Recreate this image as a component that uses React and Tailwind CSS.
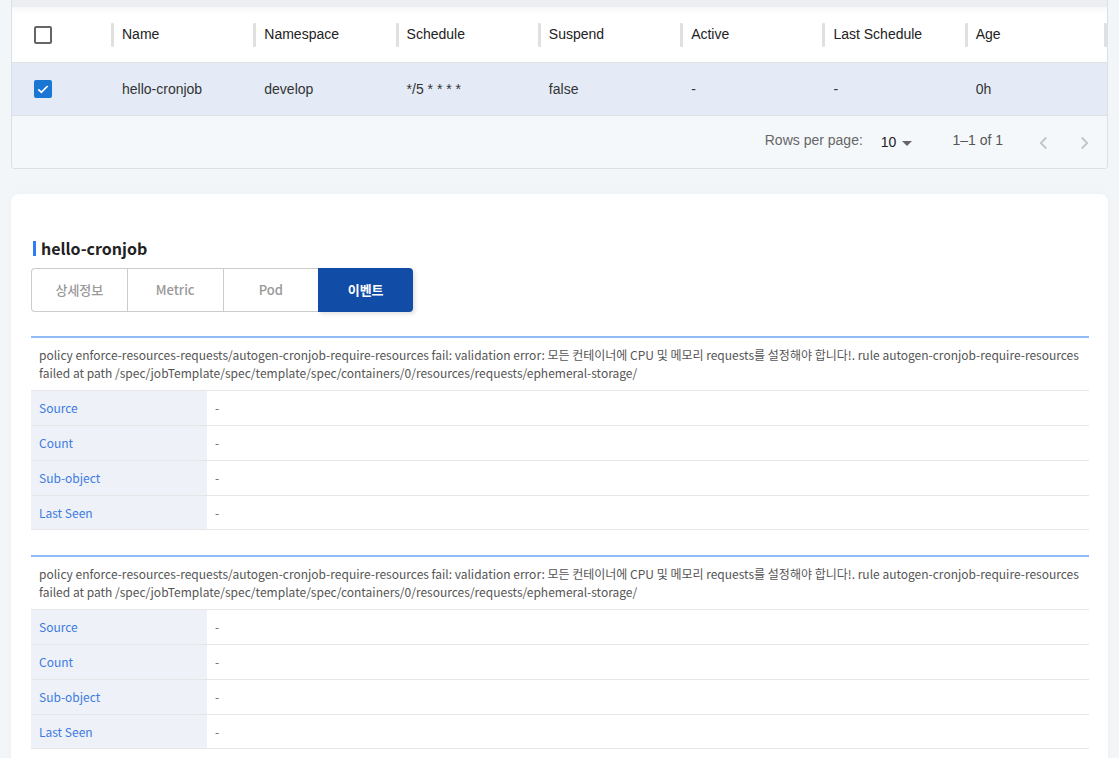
import React from "react";

const COLUMNS = ["Name", "Namespace", "Schedule", "Suspend", "Active", "Last Schedule", "Age"];
const ROW = ["hello-cronjob", "develop", "*/5 * * * *", "false", "-", "-", "0h"];

const MESSAGE =
  "policy enforce-resources-requests/autogen-cronjob-require-resources fail: validation error: 모든 컨테이너에 CPU 및 메모리 requests를 설정해야 합니다!. rule autogen-cronjob-require-resources failed at path /spec/jobTemplate/spec/template/spec/containers/0/resources/requests/ephemeral-storage/";

const EVENTS = [MESSAGE, MESSAGE];
const FIELDS = ["Source", "Count", "Sub-object", "Last Seen"];

const TABS = ["상세정보", "Metric", "Pod", "이벤트"];

const arial = { fontFamily: '"Liberation Sans", Arial, sans-serif' };
const noto = { fontFamily: '"Noto Sans CJK KR", "Noto Sans", sans-serif' };

/* ── Checkbox ── */
function Checkbox({ checked }) {
  if (checked) {
    return (
      <span className="w-[18px] h-[18px] rounded-[2px] bg-[#1976d2] flex items-center justify-center">
        <svg viewBox="0 0 24 24" className="w-[16px] h-[16px]" fill="none" stroke="#fff" strokeWidth="2.6">
          <path d="M5 12.5l4.5 4.5L19 7.5" />
        </svg>
      </span>
    );
  }
  return <span className="w-[18px] h-[18px] rounded-[2px] border-2 border-[#666]" />;
}

/* ── Cron job table ── */
function JobTable() {
  return (
    <div className="bg-white border border-t-0 border-[#dcdfe3] rounded-b-[4px] overflow-hidden" style={arial}>
      <div className="h-[7px] bg-[#eceef1]" />
      <div className="grid grid-cols-[99px_repeat(7,1fr)] h-[56px] border-b border-[#e0e0e0] bg-[linear-gradient(#f6f7f9,#ffffff_8px)]">
        <div className="flex items-center pl-[22px]">
          <Checkbox />
        </div>
        {COLUMNS.map((c, i) => (
          <div key={c} className="flex items-center">
            <span className="w-[3px] h-[24px] bg-[#e0e0e0] rounded-[1px]" />
            <span className="ml-[8px] text-[14px] text-[#222]">{c}</span>
            {i === COLUMNS.length - 1 && <span className="ml-auto w-[3px] h-[24px] bg-[#e0e0e0] rounded-[1px]" />}
          </div>
        ))}
      </div>
      <div className="grid grid-cols-[99px_repeat(7,1fr)] h-[53px] border-b border-[#e0e0e0] bg-[#e4ebf6]">
        <div className="flex items-center pl-[22px]">
          <Checkbox checked />
        </div>
        {ROW.map((v, i) => (
          <div key={i} className="flex items-center pl-[11px] text-[14px] text-[#333]">
            {v}
          </div>
        ))}
      </div>
      <div className="h-[52px] bg-[#f5f8fb] flex items-center justify-end pr-[12px] pb-[3px] text-[14px]">
        <span className="text-[#666]">Rows per page:</span>
        <span className="ml-[18px] mt-[4px] text-[#222]">10</span>
        <svg viewBox="0 0 10 5" className="ml-[6px] w-[10px] h-[5px] mt-[5px]">
          <path d="M0 0h10L5 5z" fill="#666" />
        </svg>
        <span className="ml-[40px] text-[#555]">1–1 of 1</span>
        <svg viewBox="0 0 24 24" className="ml-[30px] mt-[4px] w-[22px] h-[22px]" fill="none" stroke="#c4c4c4" strokeWidth="2">
          <path d="M14.5 6l-6 6 6 6" />
        </svg>
        <svg viewBox="0 0 24 24" className="ml-[18px] mt-[4px] w-[22px] h-[22px]" fill="none" stroke="#c4c4c4" strokeWidth="2">
          <path d="M9.5 6l6 6-6 6" />
        </svg>
      </div>
    </div>
  );
}

/* ── Event block ── */
function EventBlock({ message }) {
  return (
    <div className="border-t-2 border-[#90bbf5] mt-[25px] first:mt-0">
      <p className="px-[8px] pt-[8px] pb-[8px] text-[12px] leading-[18px] text-[#555]">{message}</p>
      {FIELDS.map((f) => (
        <div key={f} className="flex h-[35px] border-t border-[#e6e6e6] last:border-b">
          <div className="w-[176px] bg-[#eef1f8] pl-[8px] flex items-center text-[12px] text-[#3d7be0]">{f}</div>
          <div className="pl-[8px] flex items-center text-[12px] text-[#666]">-</div>
        </div>
      ))}
    </div>
  );
}

/* ── Detail panel ── */
function DetailPanel() {
  return (
    <div className="mt-[25px] bg-white rounded-[8px] shadow-[0_0_6px_rgba(0,0,0,0.03)] pt-[42px] pl-[20px] pr-[19px]" style={noto}>
      <div className="flex items-center h-[24px]">
        <span className="w-[3px] h-[15px] bg-[#2f7cf6] ml-[2px]" />
        <span className="ml-[5px] text-[16px] font-bold text-[#222]">hello-cronjob</span>
      </div>
      <div className="mt-[8px] flex w-[382px] h-[44px]">
        {TABS.map((t, i) => {
          const active = i === TABS.length - 1;
          return (
            <div
              key={t}
              className={
                active
                  ? "flex-1 flex items-center justify-center bg-[#114ca7] text-white text-[13px] font-bold rounded-r-[4px] shadow-[2px_2px_4px_rgba(0,0,0,0.12)]"
                  : "flex-1 flex items-center justify-center border border-[#cccccc] border-r-0 first:rounded-l-[4px] text-[#999] text-[13px] font-medium"
              }
            >
              {t}
            </div>
          );
        })}
      </div>
      <div className="mt-[24px]">
        {EVENTS.map((m, i) => (
          <EventBlock key={i} message={m} />
        ))}
      </div>
      <div className="h-[20px]" />
    </div>
  );
}

export default function App() {
  return (
    <div className="min-h-screen bg-[#f3f6f9] pl-[11px] pr-[11px] overflow-hidden">
      <JobTable />
      <DetailPanel />
    </div>
  );
}
